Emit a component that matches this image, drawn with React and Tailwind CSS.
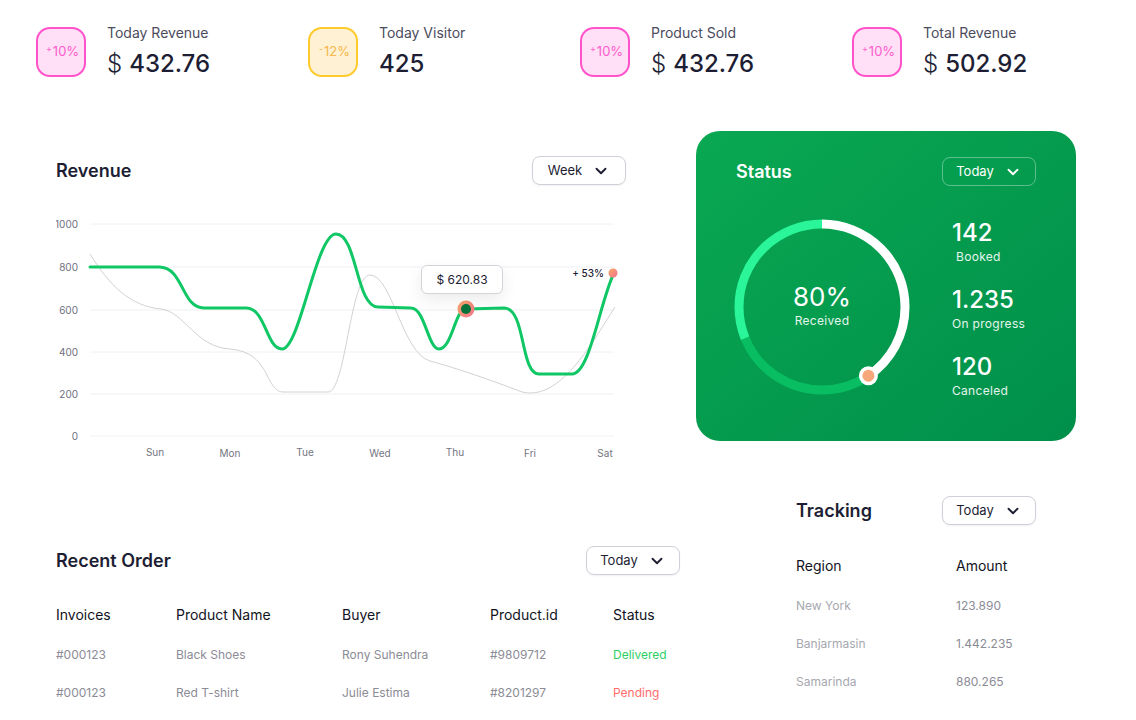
import { ChevronDown } from 'lucide-react';

const stats = [
  { label: 'Today Revenue', value: '432.76', dollar: true, change: '10%', sign: '+', tone: 'pink' },
  { label: 'Today Visitor', value: '425', dollar: false, change: '12%', sign: '-', tone: 'yellow' },
  { label: 'Product Sold', value: '432.76', dollar: true, change: '10%', sign: '+', tone: 'pink' },
  { label: 'Total Revenue', value: '502.92', dollar: true, change: '10%', sign: '+', tone: 'pink' },
];

const orders = [
  { invoice: '#000123', product: 'Black Shoes', buyer: 'Rony Suhendra', id: '#9809712', status: 'Delivered' },
  { invoice: '#000123', product: 'Red T-shirt', buyer: 'Julie Estima', id: '#8201297', status: 'Pending' },
];

const regions = [
  { name: 'New York', amount: '123.890' },
  { name: 'Banjarmasin', amount: '1.442.235' },
  { name: 'Samarinda', amount: '880.265' },
];

const gridY = [
  { v: '1000', y: 223 },
  { v: '800', y: 266 },
  { v: '600', y: 309 },
  { v: '400', y: 351 },
  { v: '200', y: 393 },
  { v: '0', y: 435 },
];

const days = [
  { d: 'Sun', x: 155, y: 451 },
  { d: 'Mon', x: 230, y: 452 },
  { d: 'Tue', x: 305, y: 451 },
  { d: 'Wed', x: 380, y: 452 },
  { d: 'Thu', x: 455, y: 451 },
  { d: 'Fri', x: 530, y: 452 },
  { d: 'Sat', x: 605, y: 452 },
];

function Dropdown({ label, light }) {
  return (
    <button
      className={
        light
          ? 'flex items-center justify-center gap-[10px] w-[94px] h-[29px] rounded-lg border border-white/35 text-white text-[13px]'
          : 'flex items-center justify-center gap-[10px] w-[94px] h-[29px] rounded-lg border border-[#cfd0d8] text-[#1d1e33] text-[13px] shadow-[0_1px_2px_rgba(0,0,0,0.06)]'
      }
    >
      <span>{label}</span>
      <ChevronDown size={18} strokeWidth={2.5} />
    </button>
  );
}

function StatCard({ s }) {
  const pink = s.tone === 'pink';
  return (
    <div className="flex gap-[21px]">
      <div
        className={
          pink
            ? 'w-[50px] h-[50px] rounded-[14px] border-2 border-[#ff52cb] bg-[#ffe0f6] text-[#ff5ccd] flex items-center justify-center text-[13px]'
            : 'w-[50px] h-[50px] rounded-[14px] border-2 border-[#ffca2c] bg-[#fff1d4] text-[#f5b84a] flex items-center justify-center text-[13px]'
        }
      >
        <span className="pl-[3px]">
          <span className="text-[9px] relative top-[-4px] mr-[1px]">{s.sign}</span>
          {s.change}
        </span>
      </div>
      <div className="-mt-[4px]">
        <div className="text-[14px] leading-5 text-[#4b4c5e]">{s.label}</div>
        <div className="mt-[5px] text-[24px] leading-8 text-[#1d1e33]">
          {s.dollar && <span className="font-light mr-[7px]">$</span>}
          <span className="font-medium">{s.value}</span>
        </div>
      </div>
    </div>
  );
}

function RevenueChart() {
  const green =
    'M90,266 L159,266 C184,266 181,307 204,307 L246,307 C266,307 266,348 282,348 C300,348 316,233 336,233 C357,233 356,306 378,306 L411,307 C425,307 428,348 439,348 C452,348 455,308 466,308 L504,307 C526,307 520,373 539,373 L572,373 C590,373 600,300 614,272';
  const grey =
    'M90,253 C110,285 130,305 161,308 C185,311 195,346 230,348 C250,350 258,358 266,372 C274,389 278,391 284,391 L328,391 C346,391 350,274 370,274 C392,274 402,352 430,360 C452,366 480,375 522,391 C560,400 590,345 615,306';
  return (
    <div className="relative w-[570px] h-[260px] mt-[16px]">
      <svg width="570" height="260" viewBox="56 200 570 260" className="block">
        <defs>
          <linearGradient id="dotg" x1="0" y1="0" x2="1" y2="1">
            <stop offset="0" stopColor="#f8aa66" />
            <stop offset="1" stopColor="#f2738f" />
          </linearGradient>
        </defs>
        {gridY.map((g) => (
          <g key={g.v}>
            <line x1="90" x2="614" y1={g.y} y2={g.y} stroke="#eff0f3" strokeWidth="1" />
            <text x="78" y={g.y + 3.5} textAnchor="end" fontSize="10" fill="#6f7080">
              {g.v}
            </text>
          </g>
        ))}
        {days.map((d) => (
          <text key={d.d} x={d.x} y={d.y + 3.5} textAnchor="middle" fontSize="10" fill="#74757f">
            {d.d}
          </text>
        ))}
        <path d={grey} fill="none" stroke="#d2d2d6" strokeWidth="1" />
        <path d={green} fill="none" stroke="#10c766" strokeWidth="3" strokeLinejoin="round" strokeLinecap="round" />
        <circle cx="466" cy="308" r="8.5" fill="url(#dotg)" />
        <circle cx="466" cy="308" r="5" fill="#04733b" />
        <circle cx="613" cy="272" r="4.5" fill="url(#dotg)" />
        <text x="604" y="275.5" textAnchor="end" fontSize="10" fontWeight="500" fill="#1d1e33">
          + 53%
        </text>
      </svg>
      <div className="absolute left-[365px] top-[64px] w-[82px] h-[29px] rounded-md border border-[#d3d4da] bg-white shadow-[0_6px_16px_rgba(0,0,0,0.08)] flex items-center justify-center text-[12px] text-[#1d1e33]">
        $ 620.83
      </div>
    </div>
  );
}

function StatusRing() {
  const r = 83;
  const c = 2 * Math.PI * r;
  const white = (c * 146) / 360;
  const dark = (c * 101.5) / 360;
  const light = c - white - dark;
  const a = (146 * Math.PI) / 180;
  const dx = 90 + r * Math.sin(a);
  const dy = 90 - r * Math.cos(a);
  return (
    <div className="relative w-[180px] h-[180px]">
      <svg width="180" height="180" viewBox="0 0 180 180" className="block">
        <g transform="rotate(-90 90 90)">
          <circle cx="90" cy="90" r={r} fill="none" stroke="#ffffff" strokeWidth="9" strokeDasharray={`${white} ${c}`} />
          <circle
            cx="90"
            cy="90"
            r={r}
            fill="none"
            stroke="#08bd62"
            strokeWidth="9"
            strokeDasharray={`${dark} ${c}`}
            strokeDashoffset={-white}
          />
          <circle
            cx="90"
            cy="90"
            r={r}
            fill="none"
            stroke="#2af598"
            strokeWidth="9"
            strokeDasharray={`${light} ${c}`}
            strokeDashoffset={-(white + dark)}
          />
        </g>
        <circle cx={dx} cy={dy} r="9.5" fill="#ffffff" />
        <circle cx={dx} cy={dy} r="6" fill="#f6a87a" />
      </svg>
      <div className="absolute inset-0 flex flex-col items-center justify-center -mt-[4px] text-white">
        <div className="text-[26px] leading-8">80%</div>
        <div className="text-[12px] leading-4 tracking-wide text-white/90">Received</div>
      </div>
    </div>
  );
}

export default function App() {
  return (
    <div
      className="w-[1136px] h-[720px] bg-white overflow-hidden text-[#1d1e33]"
      style={{ fontFamily: 'Inter, "Noto Sans", sans-serif' }}
    >
      <div className="grid grid-cols-4 w-[1088px] ml-[36px] pt-[27px]">
        {stats.map((s) => (
          <StatCard key={s.label} s={s} />
        ))}
      </div>

      <div className="flex mt-[51px]">
        {/* left column */}
        <div className="w-[624px] ml-[56px]">
          <div className="w-[570px] flex items-center justify-between mt-[25px]">
            <h2 className="text-[18px] font-semibold">Revenue</h2>
            <Dropdown label="Week" />
          </div>
          <RevenueChart />

          <div className="flex items-center justify-between mt-[85px]">
            <h2 className="text-[18px] font-semibold">Recent Order</h2>
            <Dropdown label="Today" />
          </div>
          <div className="mt-[29px] text-[14px]">
            <div className="flex h-5 items-center text-[#111322]">
              <div className="w-[120px]">Invoices</div>
              <div className="w-[166px]">Product Name</div>
              <div className="w-[148px]">Buyer</div>
              <div className="w-[123px]">Product.id</div>
              <div>Status</div>
            </div>
            <div className="mt-[12px] text-[12px] text-[#8b8c96]">
              {orders.map((o) => (
                <div key={o.id} className="flex h-[38px] items-center">
                  <div className="w-[120px]">{o.invoice}</div>
                  <div className="w-[166px]">{o.product}</div>
                  <div className="w-[148px]">{o.buyer}</div>
                  <div className="w-[123px]">{o.id}</div>
                  <div className={o.status === 'Delivered' ? 'text-[#2ccf66]' : 'text-[#ff6b6b]'}>{o.status}</div>
                </div>
              ))}
            </div>
          </div>
        </div>

        {/* right column */}
        <div className="ml-[16px] w-[380px]">
          <div className="w-[380px] h-[310px] rounded-[24px] bg-gradient-to-br from-[#0aa852] to-[#008f4a] text-white">
            <div className="flex items-center justify-between pt-[26px] pl-[40px] pr-[40px]">
              <h2 className="text-[18px] font-semibold">Status</h2>
              <Dropdown label="Today" light />
            </div>
            <div className="flex mt-[31px] pl-[36px]">
              <StatusRing />
              <div className="ml-[40px] mt-[2px] flex flex-col gap-[21px]">
                <div>
                  <div className="text-[24px] leading-7 font-medium">142</div>
                  <div className="mt-[2px] ml-[4px] text-[12px] leading-4 tracking-wide text-white/90">Booked</div>
                </div>
                <div>
                  <div className="text-[24px] leading-7 font-medium">1.235</div>
                  <div className="mt-[2px] text-[12px] leading-4 tracking-wide text-white/90">On progress</div>
                </div>
                <div>
                  <div className="text-[24px] leading-7 font-medium">120</div>
                  <div className="mt-[2px] text-[12px] leading-4 tracking-wide text-white/90">Canceled</div>
                </div>
              </div>
            </div>
          </div>

          <div className="ml-[100px] w-[240px] mt-[55px]">
            <div className="flex items-center justify-between">
              <h2 className="text-[18px] font-semibold">Tracking</h2>
              <Dropdown label="Today" />
            </div>
            <div className="mt-[30px] flex h-5 items-center text-[14px] text-[#111322]">
              <div className="w-[160px]">Region</div>
              <div>Amount</div>
            </div>
            <div className="mt-[12px] text-[12px]">
              {regions.map((r) => (
                <div key={r.name} className="flex h-[38px] items-center">
                  <div className="w-[160px] text-[#a7a8b0]">{r.name}</div>
                  <div className="text-[#8b8c96]">{r.amount}</div>
                </div>
              ))}
            </div>
          </div>
        </div>
      </div>
    </div>
  );
}
